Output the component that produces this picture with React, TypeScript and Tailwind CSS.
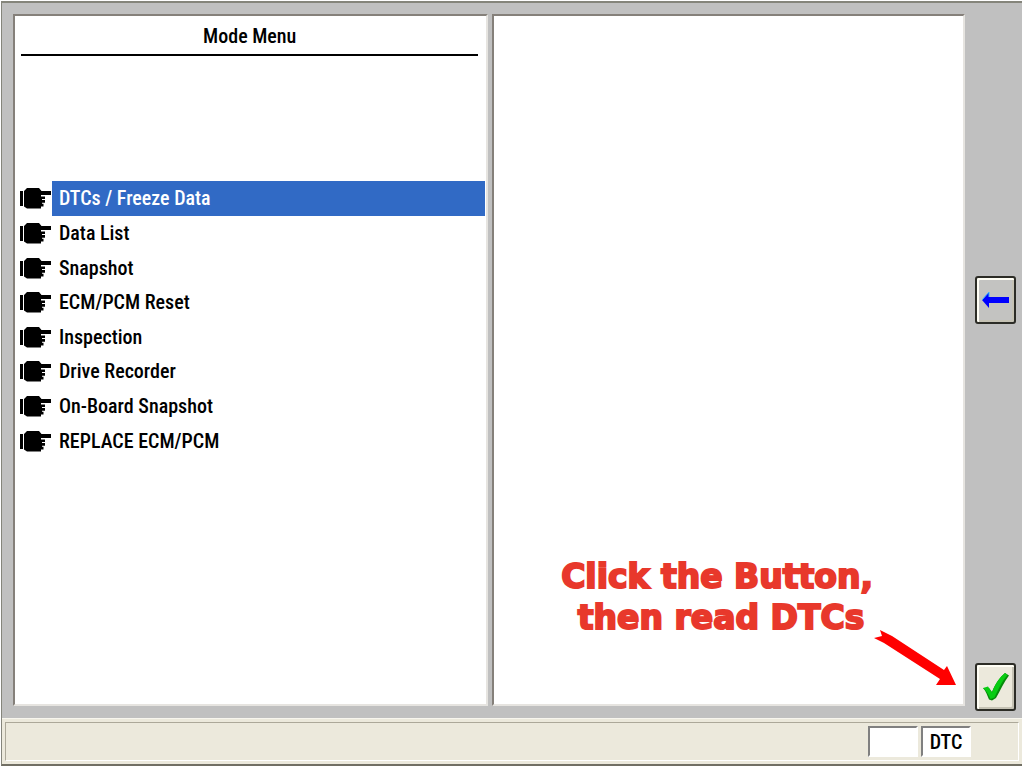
import { useState } from "react";

const modes = [
  "DTCs / Freeze Data",
  "Data List",
  "Snapshot",
  "ECM/PCM Reset",
  "Inspection",
  "Drive Recorder",
  "On-Board Snapshot",
  "REPLACE ECM/PCM",
];

function HandIcon() {
  return (
    <svg className="h-[22px] w-8 shrink-0" viewBox="0 0 32 22" aria-hidden="true">
      <path d="M0 4h3v15H0z" />
      <path d="M4 4l3-3h12l2.500 3H31v4H21v1.500h4v2.600h-3v1h3v2.600h-3v1h1.500v2.800H21V21.500H7l-3-2z" />
    </svg>
  );
}

function BackArrowIcon() {
  return (
    <svg className="h-4 w-[27px]" viewBox="0 0 27 16" aria-hidden="true">
      <path d="M0 8L7 0v5h20v6H7v5z" fill="#00f" />
      <path d="M0 8L7 0v5" fill="none" stroke="#39b5ff" strokeWidth="1" />
    </svg>
  );
}

function CheckIcon() {
  return (
    <svg className="h-7 w-[26px]" viewBox="0 0 26 28" aria-hidden="true">
      <path d="M0 15L6 15l3 4C12 11 17 4 22 0l4 2.500C21 9 17 18 13 25l-4 2.500-3-1C4 22 3 18 0 15z" fill="#078a0b" />
      <path d="M0 15l5-1.500 4 6C12 11 17 4 22 0l2.500 2C19 8 15 17 11.500 24.500l-4 1.500C5.500 22 4 18 0 15z" fill="#08cc12" />
    </svg>
  );
}

const panel =
  "min-w-0 border-2 border-t-[#85807a] border-l-[#85807a] border-r-[#e6e4e0] border-b-[#e6e4e0] bg-white";
const sideButton =
  "flex h-12 w-[41px] items-center justify-center rounded-[3px] border-2 border-[#2c2c26] shadow-[inset_2px_2px_0_#fffef5,inset_-2px_-2px_0_#c5c2b4]";
const statusBox =
  "flex h-[31px] w-[50px] items-center justify-center border-2 border-t-[#808080] border-l-[#808080] border-r-white border-b-white bg-white";

export default function App() {
  const [selected, setSelected] = useState(0);

  return (
    <div className="flex h-screen flex-col bg-white pt-px pr-0.5 pb-0.5 pl-px font-['Roboto_Condensed','Liberation_Sans_Narrow','Roboto',sans-serif] text-xl leading-6 font-medium text-black">
      <div className="flex min-h-0 flex-1 flex-col border-t-2 border-b-2 border-l border-t-[#85857b] border-b-[#716f64] border-l-[#85857b] bg-[#c0c0c0]">
        <div className="flex min-h-0 flex-1 pt-[11px] pb-3 pl-[11px]">
          <main className="grid min-w-0 flex-1 grid-cols-[476fr_473fr] gap-1">
            <section className={panel}>
              <div className="mt-2 mr-2 ml-1.5 border-b-2 border-black pb-1.5">
                <h1 className="text-center">Mode Menu</h1>
              </div>
              <ul className="mt-[125px] mr-px ml-[5px] grid h-[277px] grid-rows-8">
                {modes.map((mode, index) => (
                  <li key={mode} className="flex items-center">
                    <HandIcon />
                    <button
                      type="button"
                      aria-pressed={index === selected}
                      onClick={() => setSelected(index)}
                      className={
                        index === selected
                          ? "h-full flex-1 bg-[#316ac5] pl-[7px] text-left text-white"
                          : "h-full flex-1 pl-[7px] text-left"
                      }
                    >
                      {mode}
                    </button>
                  </li>
                ))}
              </ul>
            </section>
            <section className={`${panel} relative flex flex-col justify-end`}>
              <p className="mr-[90px] mb-[66px] self-end text-center font-['DejaVu_Sans',sans-serif] text-[33px] leading-[41px] font-bold text-[#e8382b] [-webkit-text-stroke:2px_#e8382b]">
                Click the Button,
                <br />
                <span className="pl-2">then read DTCs</span>
              </p>
              <svg
                className="absolute right-[7px] bottom-[17px] h-[58px] w-[82px]"
                viewBox="0 0 82 58"
                aria-hidden="true"
              >
                <path d="M6 1L18 7L70 41L73 37L82 56L62 56L66 50L10 14L0 9L8 7Z" fill="#f00" />
              </svg>
            </section>
          </main>
          <nav className="flex w-[57px] shrink-0 flex-col items-end pr-1.5" aria-label="Actions">
            <div className="-mb-[5px] flex flex-1 flex-col justify-between pt-[262px]">
              <button type="button" aria-label="Back" className={`${sideButton} bg-[#c3c3c1]`}>
                <BackArrowIcon />
              </button>
              <button type="button" aria-label="Confirm" className={`${sideButton} bg-[#ece9dc]`}>
                <CheckIcon />
              </button>
            </div>
          </nav>
        </div>
        <footer className="bg-[#ece9dc] px-[3px] pt-1 pb-[3px] shadow-[inset_0_1px_0_#f8f6ee]">
          <div className="flex h-[39px] items-center justify-end gap-[3px] border border-t-[#aca899] border-r-white border-b-white border-l-[#aca899] pr-[47px]">
            <div className={statusBox} />
            <div className={statusBox}>DTC</div>
          </div>
        </footer>
      </div>
    </div>
  );
}
